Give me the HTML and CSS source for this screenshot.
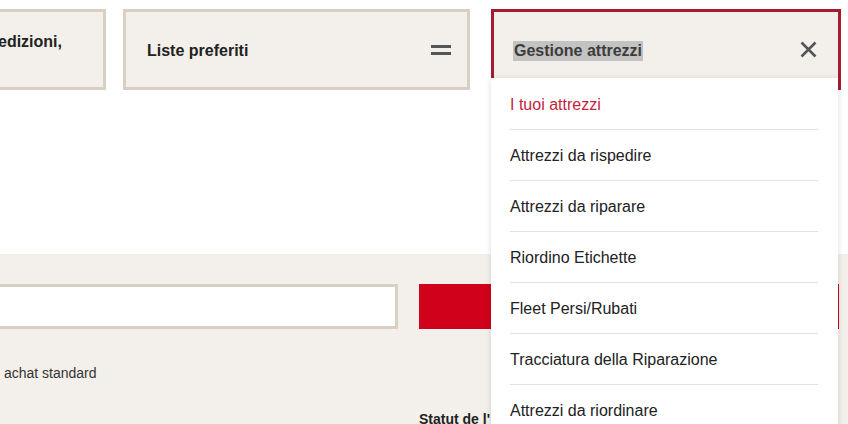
FILE: index.html
```html
<!DOCTYPE html>
<html lang="it">
<head>
<meta charset="utf-8">
<link rel="stylesheet" href="styles.css">
</head>
<body>
<div class="top">
  <div class="tiles">
    <div class="tile tile-1">
      <span class="tile-label">Stato ordini e spedizioni,</span>
    </div>
    <div class="tile tile-2">
      <span class="tile-label">Liste preferiti</span>
      <svg class="icon-eq" width="20" height="10" viewBox="0 0 20 10"><rect x="0" y="0" width="20" height="3" fill="#555"/><rect x="0" y="7" width="20" height="3" fill="#555"/></svg>
    </div>
    <div class="tile tile-3 open">
      <span class="tile-label"><span class="hl">Gestione attrezzi</span></span>
      <svg class="icon-x" width="17" height="17" viewBox="0 0 17 17"><path d="M1.5 1.5 L15.5 15.5 M15.5 1.5 L1.5 15.5" stroke="#555" stroke-width="2.6" fill="none"/></svg>
      <ul class="menu">
        <li class="active">I tuoi attrezzi</li>
        <li>Attrezzi da rispedire</li>
        <li>Attrezzi da riparare</li>
        <li>Riordino Etichette</li>
        <li>Fleet Persi/Rubati</li>
        <li>Tracciatura della Riparazione</li>
        <li>Attrezzi da riordinare</li>
      </ul>
    </div>
  </div>
</div>
<div class="bottom">
  <div class="search-row">
    <div class="input"></div>
    <div class="btn"></div>
  </div>
  <p class="note"><span class="cut">Utiliser un</span> achat standard</p>
  <div class="status-row">
    <span class="status">Statut de l'</span>
  </div>
</div>
</body>
</html>
```

FILE: styles.css
```css
* { box-sizing: border-box; }
html, body { margin: 0; padding: 0; }
body {
  width: 848px;
  height: 424px;
  overflow: hidden;
  background: #fff;
  font-family: "Liberation Sans", Arial, sans-serif;
  color: #222;
}
.top {
  height: 254px;
  padding-top: 9px;
}
.tiles {
  display: flex;
  margin-left: -241px;
}
.tile {
  position: relative;
  height: 81px;
  background: #f3f0eb;
  border: 3px solid #d8d0c2;
  display: flex;
  align-items: center;
  justify-content: space-between;
  padding: 2px 16px 0 21px;
}
.tile-1 {
  width: 347px;
  margin-right: 17px;
  justify-content: flex-end;
  align-items: flex-start;
  padding: 0 41px 0 21px;
}
.tile-2 { width: 347px; margin-right: 21px; }
.tile-3 { width: 350px; border-color: #a51c30; padding: 2px 21px 0 19px; }
.tile-label {
  font-size: 16px;
  font-weight: bold;
  line-height: 19px;
  color: #222;
}
.tile-1 .tile-label { margin-top: 20px; white-space: nowrap; }
.hl {
  background: #c3c3c3;
  color: #3c3c3c;
  padding: 1px 1px 2px 1px;
}
.icon-eq { display: block; margin-top: -1px; }
.icon-x { display: block; margin-top: -2px; }
.menu {
  position: absolute;
  left: -3px;
  top: 66px;
  width: 347px;
  margin: 0;
  padding: 1px 20px 0 19px;
  list-style: none;
  background: #fff;
  box-shadow: 0 1px 6px rgba(0, 0, 0, 0.14);
  z-index: 2;
}
.menu li {
  font-size: 16px;
  line-height: 18px;
  padding: 17px 0 15px;
  border-bottom: 1px solid #e2e2e2;
  color: #222;
}
.menu li.active { color: #c4243d; }
.bottom {
  height: 170px;
  background: #f3f0eb;
  padding-top: 30px;
}
.search-row {
  display: flex;
  height: 45px;
}
.input {
  width: 420px;
  margin-left: -22px;
  background: #fff;
  border: 3px solid #d8d0c2;
}
.btn {
  width: 420px;
  margin-left: 21px;
  background: #d0021b;
}
.note {
  margin: 36px 0 0 0;
  font-size: 14px;
  line-height: 16px;
  color: #333;
  white-space: nowrap;
}
.cut {
  display: inline-block;
  width: 100px;
  margin-left: -100px;
  text-align: right;
}
.status-row {
  margin-top: 29px;
  padding-left: 419px;
}
.status {
  font-size: 14px;
  font-weight: bold;
  line-height: 16px;
  color: #222;
}
```
